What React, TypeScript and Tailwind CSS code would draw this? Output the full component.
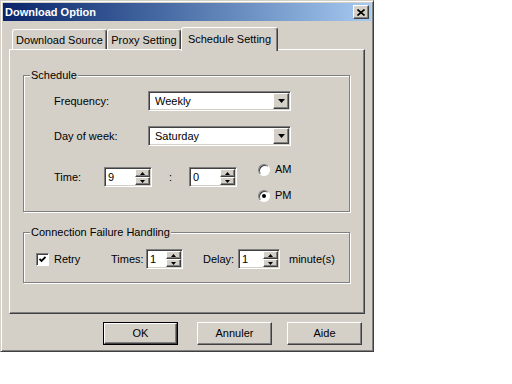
import type { ReactNode } from "react";

const raised =
  "border border-t-white border-l-white border-r-[#404040] border-b-[#404040] shadow-[inset_-1px_-1px_0_#808080] bg-[#d4d0c8]";
const sunken =
  "border border-t-[#808080] border-l-[#808080] border-r-white border-b-white shadow-[inset_1px_1px_0_#404040,inset_-1px_-1px_0_#d4d0c8]";

function ComboBox({ value }: { value: string }) {
  return (
    <div className={`flex h-[20px] w-[143px] items-stretch bg-white p-[1px] ${sunken}`}>
      <span className="flex-1 pl-[5px] leading-[16px]">{value}</span>
      <div className={`flex w-[16px] items-center justify-center ${raised}`}>
        <svg width="7" height="4" viewBox="0 0 7 4">
          <path d="M0 0h7L3.5 4z" fill="#000" />
        </svg>
      </div>
    </div>
  );
}

function SpinBox({ value, className }: { value: string; className: string }) {
  return (
    <div className={`flex h-[20px] items-stretch bg-white p-[1px] ${sunken} ${className}`}>
      <span className="flex-1 pl-[2px] leading-[16px]">{value}</span>
      <div className="flex w-[15px] flex-col">
        <div className={`flex flex-1 items-center justify-center ${raised}`}>
          <svg width="5" height="3" viewBox="0 0 5 3">
            <path d="M2.5 0L5 3H0z" fill="#000" />
          </svg>
        </div>
        <div className={`flex flex-1 items-center justify-center ${raised}`}>
          <svg width="5" height="3" viewBox="0 0 5 3">
            <path d="M0 0h5L2.5 3z" fill="#000" />
          </svg>
        </div>
      </div>
    </div>
  );
}

function Radio({ label, checked }: { label: string; checked?: boolean }) {
  return (
    <div className="flex h-[13px] items-center">
      <div className="flex h-[12px] w-[12px] items-center justify-center rounded-full border border-t-[#808080] border-l-[#808080] border-r-white border-b-white bg-white shadow-[inset_1px_1px_0_#404040]">
        {checked && <div className="h-[4px] w-[4px] rounded-full bg-black" />}
      </div>
      <span className="ml-[5px]">{label}</span>
    </div>
  );
}

function GroupBox({
  title,
  className,
  children,
}: {
  title: string;
  className: string;
  children: ReactNode;
}) {
  return (
    <div
      className={`relative w-[327px] border border-[#808080] shadow-[1px_1px_0_#fff,inset_1px_1px_0_#fff] ${className}`}
    >
      <span className="absolute -top-[8px] left-[6px] bg-[#d4d0c8] px-[1px] leading-[14px]">
        {title}
      </span>
      {children}
    </div>
  );
}

function Tab({
  label,
  className,
  active,
}: {
  label: string;
  className: string;
  active?: boolean;
}) {
  return (
    <div
      className={`flex justify-center rounded-t-[3px] border-t border-l border-r border-t-white border-l-white border-r-[#404040] bg-[#d4d0c8] shadow-[inset_-1px_0_0_#808080] ${
        active ? "relative z-10 -mb-[2px] h-[24px] pt-[3px]" : "h-[20px] pt-[2px]"
      } ${className}`}
    >
      {label}
    </div>
  );
}

function PushButton({ label, isDefault }: { label: string; isDefault?: boolean }) {
  return (
    <div className={`h-[23px] w-[75px] ${isDefault ? "border border-black" : ""}`}>
      <div className={`flex h-full w-full items-center justify-center ${raised}`}>{label}</div>
    </div>
  );
}

export default function App() {
  return (
    <div className="h-[384px] w-[512px] bg-white font-['Liberation_Sans',Arial,sans-serif] text-[11px] text-black">
      <div className="flex h-[352px] w-[374px] flex-col border border-t-[#d4d0c8] border-l-[#d4d0c8] border-r-[#404040] border-b-[#404040] bg-[#d4d0c8] p-[2px] shadow-[inset_1px_1px_0_#fff,inset_-1px_-1px_0_#808080]">
        <div className="flex h-[18px] items-center bg-gradient-to-r from-[#0a246a] to-[#a6caf0] pl-[2px] pr-[2px]">
          <span className="flex-1 text-[11px] font-bold text-white">Download Option</span>
          <div className={`flex h-[14px] w-[16px] items-center justify-center ${raised}`}>
            <svg width="8" height="7" viewBox="0 0 8 7">
              <path d="M0.5 0.5L7.5 6.5M7.5 0.5L0.5 6.5" stroke="#000" strokeWidth="1.6" />
            </svg>
          </div>
        </div>

        <div className="mt-[6px] flex h-[22px] items-end pl-[9px]">
          <Tab label="Download Source" className="w-[95px]" />
          <Tab label="Proxy Setting" className="w-[74px]" />
          <Tab label="Schedule Setting" className="w-[97px]" active />
        </div>

        <div className="ml-[6px] h-[265px] w-[356px] border border-t-white border-l-white border-r-[#404040] border-b-[#404040] pl-[13px] pt-[25px] shadow-[inset_-1px_-1px_0_#808080]">
          <GroupBox title="Schedule" className="h-[137px] pl-[30px] pt-[15px]">
            <div className="flex h-[20px] items-center">
              <span className="w-[94px]">Frequency:</span>
              <ComboBox value="Weekly" />
            </div>
            <div className="mt-[15px] flex h-[20px] items-center">
              <span className="w-[94px]">Day of week:</span>
              <ComboBox value="Saturday" />
            </div>
            <div className="mt-[17px] flex items-start">
              <div className="mt-[4px] flex h-[20px] items-center">
                <span className="w-[50px]">Time:</span>
                <SpinBox value="9" className="w-[48px]" />
                <span className="w-[37px] text-center">:</span>
                <SpinBox value="0" className="w-[48px]" />
              </div>
              <div className="ml-[21px] flex flex-col gap-[13px]">
                <Radio label="AM" />
                <Radio label="PM" checked />
              </div>
            </div>
          </GroupBox>

          <GroupBox title="Connection Failure Handling" className="mt-[20px] h-[51px] pl-[12px] pt-[16px]">
            <div className="flex h-[20px] items-center">
              <div className="flex h-[13px] w-[13px] items-center justify-center bg-white border border-t-[#808080] border-l-[#808080] border-r-white border-b-white shadow-[inset_1px_1px_0_#404040]">
                <svg width="7" height="7" viewBox="0 0 7 7">
                  <path d="M0.5 3L2.5 5L6.5 1" stroke="#000" strokeWidth="1.8" fill="none" />
                </svg>
              </div>
              <span className="ml-[5px] w-[57px]">Retry</span>
              <span className="w-[35px]">Times:</span>
              <SpinBox value="1" className="w-[37px]" />
              <span className="ml-[20px] w-[35px]">Delay:</span>
              <SpinBox value="1" className="w-[42px]" />
              <span className="ml-[9px]">minute(s)</span>
            </div>
          </GroupBox>
        </div>

        <div className="mt-[8px] flex pl-[100px]">
          <PushButton label="OK" isDefault />
          <div className="ml-[19px]">
            <PushButton label="Annuler" />
          </div>
          <div className="ml-[15px]">
            <PushButton label="Aide" />
          </div>
        </div>
      </div>
    </div>
  );
}
